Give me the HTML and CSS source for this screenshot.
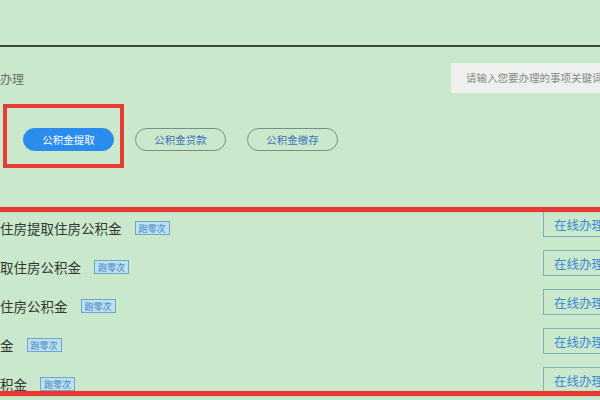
FILE: index.html
```html
<!DOCTYPE html>
<html lang="zh">
<head>
<meta charset="utf-8">
<link rel="stylesheet" href="styles.css">
</head>
<body>
<div class="page">
  <div class="top"></div>
  <div class="rule"></div>
  <div class="head">
    <span class="title">办理</span>
    <div class="search">请输入您要办理的事项关键词</div>
  </div>
  <div class="tabs">
    <span class="tab active">公积金提取</span>
    <span class="tab">公积金贷款</span>
    <span class="tab">公积金缴存</span>
  </div>
  <div class="list">
    <div class="row"><span class="name">住房提取住房公积金</span><span class="tag">跑零次</span><span class="go">在线办理</span></div>
    <div class="row"><span class="name">取住房公积金</span><span class="tag">跑零次</span><span class="go">在线办理</span></div>
    <div class="row"><span class="name">住房公积金</span><span class="tag">跑零次</span><span class="go">在线办理</span></div>
    <div class="row"><span class="name">金</span><span class="tag">跑零次</span><span class="go">在线办理</span></div>
    <div class="row"><span class="name">积金</span><span class="tag">跑零次</span><span class="go">在线办理</span></div>
  </div>
  <div class="mark mark-box"></div>
  <div class="mark mark-line1"></div>
  <div class="mark mark-line2"></div>
</div>
</body>
</html>
```
FILE: styles.css
```css
html, body {
  margin: 0;
  padding: 0;
  background: #cae8cc;
}
body {
  font-family: "Noto Sans CJK SC", "Noto Sans", sans-serif;
  width: 600px;
  height: 400px;
  overflow: hidden;
}
.page {
  position: relative;
  width: 600px;
  height: 400px;
  overflow: hidden;
}
.top {
  height: 45px;
}
.rule {
  height: 2px;
  background: #3b463d;
}
.head {
  display: flex;
  align-items: center;
  justify-content: space-between;
  margin-top: 16px;
  height: 30px;
}
.title {
  font-size: 12px;
  color: #6a6f6a;
}
.search {
  width: 136px;
  height: 30px;
  margin-right: -2px;
  background: #eef0ee;
  color: #858885;
  font-size: 10.5px;
  line-height: 30px;
  padding-left: 15px;
  white-space: nowrap;
  overflow: hidden;
}
.tabs {
  display: flex;
  gap: 21px;
  margin-top: 35px;
  padding-left: 23px;
}
.tab {
  box-sizing: border-box;
  width: 91px;
  height: 23px;
  border: 1px solid #7d8c8a;
  border-radius: 12px;
  font-size: 10.5px;
  color: #3d72b8;
  display: flex;
  align-items: center;
  justify-content: center;
}
.tab.active {
  background: #2a8cec;
  border-color: #2a8cec;
  color: #ffffff;
}
.list {
  margin-top: 60px;
  display: flex;
  flex-direction: column;
  gap: 13px;
}
.row {
  display: flex;
  align-items: center;
  height: 26px;
  position: relative;
}
.name {
  font-size: 13.5px;
  color: #333833;
  margin-top: 8px;
  white-space: nowrap;
}
.tag {
  box-sizing: border-box;
  margin-left: 13px;
  margin-top: 8px;
  height: 14px;
  width: 35px;
  border: 1px solid #6aa8d0;
  background: #bfe0ec;
  color: #3a86cc;
  font-size: 9px;
  display: flex;
  align-items: center;
  justify-content: center;
}
.go {
  box-sizing: border-box;
  margin-left: auto;
  width: 72px;
  margin-right: -15px;
  height: 26px;
  border: 1px solid #7eaec0;
  color: #3a8ad6;
  font-size: 12.5px;
  padding-left: 10px;
  white-space: nowrap;
  display: flex;
  align-items: center;
}
.mark {
  position: absolute;
  box-sizing: border-box;
}
.mark-box {
  left: 3px;
  top: 104px;
  width: 121px;
  height: 64px;
  border: 4px solid #e53a35;
}
.mark-line1 {
  left: 0;
  top: 207px;
  width: 600px;
  height: 5px;
  background: #e53a35;
  box-shadow: 0 0 1px #f08a70;
}
.mark-line2 {
  left: 0;
  top: 391px;
  width: 600px;
  height: 5px;
  background: #e53a35;
  box-shadow: 0 0 1px #f08a70;
}
```
